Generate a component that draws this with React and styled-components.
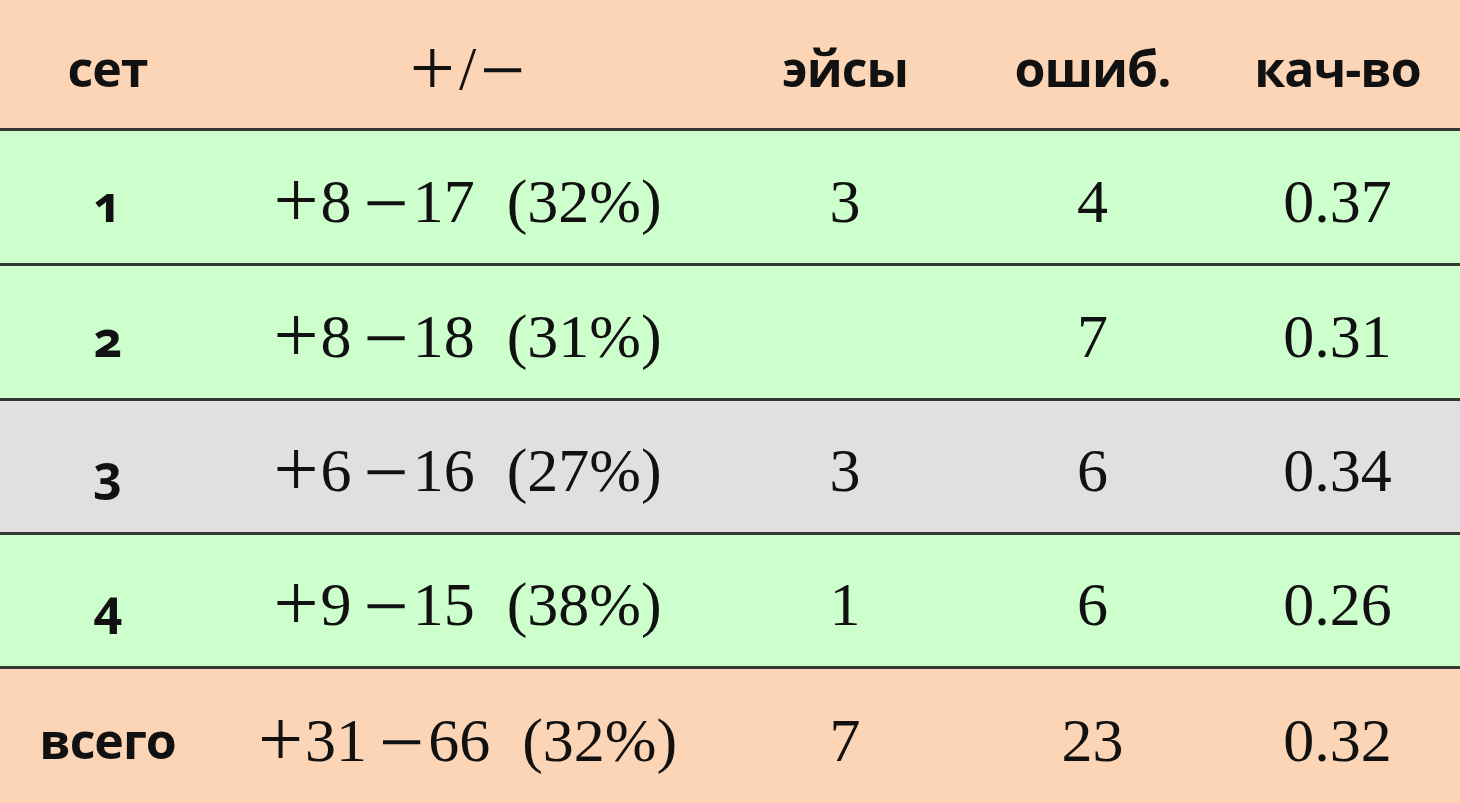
import React from "react";
import styled, { createGlobalStyle } from "styled-components";

const Global = createGlobalStyle`
  html, body { margin: 0; padding: 0; background: #ffffff; }
  body { width: 1460px; height: 803px; overflow: hidden; }
`;

const Table = styled.div`
  display: flex;
  flex-direction: column;
  width: 1460px;
  height: 803px;
  background: #333833;
  gap: 3px;
`;

const bg = {
  head: "#fbd5b5",
  green: "#ccffcc",
  gray: "#e0e0e0",
};

const Row = styled.div`
  display: grid;
  grid-template-columns: 215px 505px 250px 245px 245px;
  height: ${(p) => p.$h}px;
  background: ${(p) => bg[p.$tone]};
  align-items: center;
  justify-items: center;
`;

const Label = styled.div`
  font-family: "Open Sans", "Noto Sans", sans-serif;
  font-weight: 700;
  font-size: 50px;
  letter-spacing: -1px;
  color: #111;
  font-variant-numeric: oldstyle-nums;
  transform: translateY(${(p) => p.$dy || 0}px);
`;

const Num = styled.div`
  font-family: "Liberation Serif", "Times New Roman", serif;
  font-size: 62px;
  line-height: 1.2;
  color: #111;
  transform: translateY(${(p) => p.$dy || 0}px);
`;

const Score = styled(Num)`
  display: flex;
  align-items: baseline;
`;

const Part = styled.span`
  margin-left: ${(p) => p.$ml || 0}px;
`;

const Op = styled.span`
  font-size: 80px;
  line-height: 0;
  margin: 0 ${(p) => p.$mr || 0}px 0 ${(p) => p.$ml || 0}px;
  transform: translateY(${(p) => p.$dy ?? 6}px);
`;

const Slash = styled.span`
  margin: 0 4px;
`;

const rows = [
  { set: "1", plus: 8, minus: 17, pct: 32, aces: "3", err: "4", q: "0.37", tone: "green", h: 132 },
  { set: "2", plus: 8, minus: 18, pct: 31, aces: "", err: "7", q: "0.31", tone: "green", h: 132 },
  { set: "3", plus: 6, minus: 16, pct: 27, aces: "3", err: "6", q: "0.34", tone: "gray", h: 131 },
  { set: "4", plus: 9, minus: 15, pct: 38, aces: "1", err: "6", q: "0.26", tone: "green", h: 131 },
];

function ScoreCell({ plus, minus, pct }) {
  return (
    <Score $dy={4}>
      <Op $mr={2} $dy={5}>+</Op>
      <Part>{plus}</Part>
      <Op $ml={12} $mr={4} $dy={8}>−</Op>
      <Part>{minus}</Part>
      <Part $ml={32}>({pct}%)</Part>
    </Score>
  );
}

export default function App() {
  return (
    <>
      <Global />
      <Table>
        <Row $tone="head" $h={128}>
          <Label $dy={4}>сет</Label>
          <Score $dy={4}>
            <Op $dy={6}>+</Op>
            <Slash>/</Slash>
            <Op $dy={8}>−</Op>
          </Score>
          <Label $dy={4}>эйсы</Label>
          <Label $dy={4}>ошиб.</Label>
          <Label $dy={4}>кач-во</Label>
        </Row>
        {rows.map((r) => (
          <Row key={r.set} $tone={r.tone} $h={r.h}>
            <Label $dy={6}>{r.set}</Label>
            <ScoreCell plus={r.plus} minus={r.minus} pct={r.pct} />
            <Num $dy={4}>{r.aces}</Num>
            <Num $dy={4}>{r.err}</Num>
            <Num $dy={4}>{r.q}</Num>
          </Row>
        ))}
        <Row $tone="head" $h={134}>
          <Label $dy={4}>всего</Label>
          <ScoreCell plus={31} minus={66} pct={32} />
          <Num $dy={4}>7</Num>
          <Num $dy={4}>23</Num>
          <Num $dy={4}>0.32</Num>
        </Row>
      </Table>
    </>
  );
}
